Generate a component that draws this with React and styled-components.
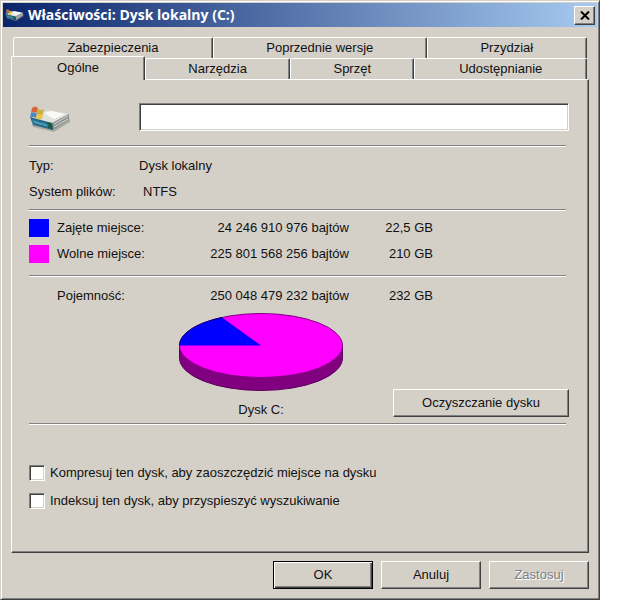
import React from 'react';
import styled, { createGlobalStyle, css } from 'styled-components';

const GlobalStyle = createGlobalStyle`
  * {
    box-sizing: border-box;
  }

  body {
    margin: 0;
    background: #ffffff;
    color: #111111;
    font: 13px/18px 'Liberation Sans', Arial, sans-serif;
  }
`;

const raised = css`
  border: 1px solid;
  border-color: #ffffff #404040 #404040 #ffffff;
  box-shadow: inset -1px -1px 0 #808080;
`;

const sunken = css`
  border: 1px solid;
  border-color: #808080 #ffffff #ffffff #808080;
  box-shadow: inset 1px 1px 0 #404040, inset -1px -1px 0 #d4d0c8;
`;

const Dialog = styled.main`
  margin-right: 40px;
  padding: 1px 2px 10px 1px;
  background: #d4d0c8;
  border: 1px solid;
  border-color: #d4d0c8 #404040 #404040 #d4d0c8;
  box-shadow: inset 1px 1px 0 #ffffff, inset -1px -1px 0 #808080;
`;

const TitleBar = styled.header`
  display: flex;
  align-items: center;
  height: 24px;
  margin: 1px 0 0 1px;
  padding: 0 2px 0 2px;
  background: linear-gradient(to right, #0a246a, #a6caf0);
`;

const Title = styled.h1`
  flex: 1;
  margin: 0 0 0 4px;
  color: #ffffff;
  font: bold 14px/18px 'Open Sans', Tahoma, sans-serif;
`;

const CloseButton = styled.button`
  ${raised}
  display: grid;
  place-items: center;
  width: 21px;
  height: 19px;
  padding: 0;
  background: #d4d0c8;
`;

const Tabs = styled.div`
  margin: 10px 9px 0 10px;
`;

const TabRow = styled.div`
  display: flex;
  margin: 0 1px;
`;

const Tab = styled.button`
  flex: ${({ $size }) => $size} 1 0;
  height: 21px;
  padding: 0;
  background: #d4d0c8;
  border: solid;
  border-width: 1px 1px 0;
  border-color: #ffffff #404040 #ffffff #ffffff;
  border-radius: 2px 2px 0 0;
  box-shadow: inset -1px 0 0 #808080;
  color: inherit;
  font: inherit;

  ${({ $selected }) =>
    $selected &&
    css`
      position: relative;
      height: 24px;
      margin: -2px 0 -1px -2px;
      padding-bottom: 2px;
    `}
`;

const Panel = styled.section`
  ${raised}
  margin: 0 8px 0 9px;
  padding: 22px 19px 42px 17px;
`;

const DriveHeader = styled.div`
  display: flex;
  align-items: center;
`;

const DriveSlot = styled.div`
  width: 110px;
  padding-top: 4px;
  line-height: 0;
`;

const NameInput = styled.input`
  ${sunken}
  flex: 1;
  min-width: 0;
  height: 28px;
  padding: 0 6px;
  background: #ffffff;
  font: inherit;
`;

const Rule = styled.hr`
  height: 2px;
  margin: ${({ $above }) => $above}px 3px ${({ $below }) => $below}px 0;
  border: 0;
  border-top: 1px solid #808080;
  background: #ffffff;
`;

const Facts = styled.dl`
  display: grid;
  grid-template-columns: 110px 1fr;
  margin: 0;
  line-height: 26px;
`;

const Term = styled.dt``;

const Value = styled.dd`
  margin: 0;
  padding-left: ${({ $indent }) => ($indent ? 4 : 0)}px;
`;

const Usage = styled.table`
  width: 404px;
  border-collapse: collapse;
  table-layout: fixed;
  line-height: 18px;
`;

const SwatchCell = styled.td`
  width: 28px;
  height: 26px;
  padding: 0;
`;

const Swatch = styled.span`
  display: block;
  width: 20px;
  height: 18px;
  background: ${({ $color }) => $color};
`;

const UsageLabel = styled.th`
  width: 120px;
  padding: 0;
  font-weight: normal;
  text-align: left;
`;

const Amount = styled.td`
  width: ${({ $wide }) => ($wide ? 172 : 84)}px;
  padding: 0;
  text-align: right;
`;

const ChartRow = styled.div`
  display: flex;
  align-items: flex-end;
  justify-content: space-between;
  padding-top: 4px;
`;

const Chart = styled.figure`
  margin: 0 0 0 150px;
  line-height: 0;
`;

const Caption = styled.figcaption`
  padding-top: 12px;
  line-height: 14px;
  text-align: center;
`;

const Button = styled.button`
  ${raised}
  width: ${({ $wide }) => ($wide ? 176 : 100)}px;
  height: 28px;
  padding: 0;
  background: #d4d0c8;
  color: inherit;
  font: inherit;

  ${({ $primary }) =>
    $primary &&
    css`
      border-color: #000000;
      box-shadow: inset 1px 1px 0 #ffffff, inset -1px -1px 0 #404040, inset -2px -2px 0 #808080;
    `}

  &:disabled {
    color: #808080;
    text-shadow: 1px 1px 0 #ffffff;
  }
`;

const Options = styled.div`
  display: grid;
  gap: 10px;
  padding-top: 34px;
`;

const Option = styled.label`
  display: flex;
  align-items: center;
  gap: 5px;
`;

const Checkbox = styled.input`
  ${sunken}
  appearance: none;
  width: 16px;
  height: 16px;
  margin: 0;
  background: #ffffff;
`;

const Actions = styled.footer`
  display: flex;
  justify-content: flex-end;
  gap: 8px;
  margin: 8px 8px 0 0;
`;

const backTabs = [
  { label: 'Zabezpieczenia', size: 200 },
  { label: 'Poprzednie wersje', size: 214 },
  { label: 'Przydział', size: 160 },
];

const frontTabs = [
  { label: 'Ogólne', size: 134, selected: true },
  { label: 'Narzędzia', size: 145 },
  { label: 'Sprzęt', size: 124 },
  { label: 'Udostępnianie', size: 173 },
];

const usage = [
  { label: 'Zajęte miejsce:', bytes: '24 246 910 976 bajtów', size: '22,5 GB', color: '#0000ff' },
  { label: 'Wolne miejsce:', bytes: '225 801 568 256 bajtów', size: '210 GB', color: '#ff00ff' },
];

const capacity = [{ label: 'Pojemność:', bytes: '250 048 479 232 bajtów', size: '232 GB' }];

const DriveIcon = ({ width, height }) => (
  <svg width={width} height={height} viewBox="0 0 42 26" aria-hidden="true">
    <path d="M3 18 L24 23 L41 13 L41 16 L25 26 L4 21 Z" fill="#8f938f" opacity="0.6" />
    <path d="M1 11 L19 4 L40 8 L23 17 Z" fill="#e0e2df" />
    <path d="M15 7 L22 5 L36 8 L25 13 Z" fill="#f9faf8" />
    <path d="M23 17 L40 8 L40 14 L24 24 Z" fill="#8b908c" />
    <path d="M25 18 L39 10 M25 21 L39 13" stroke="#d9dbd8" strokeWidth="1" />
    <path d="M1 11 L23 17 L24 24 L4 19 Z" fill="#26698c" />
    <path d="M3 14 L20 19 L20 21 L5 17 Z" fill="#4d9bb0" />
    <path d="M18 16 L23 17 L24 24 L19 22 Z" fill="#1b5a4c" />
    <path d="M3 2 Q6 -1 9 2 L8 7 Q5 5 2 7 Z" fill="#d9653b" />
    <path d="M9 3 Q12 5 15 3 L14 8 Q11 10 8 8 Z" fill="#c9b23e" />
    <path d="M2 7 Q5 5 8 8 L7 12 Q4 10 1 12 Z" fill="#4f87bd" />
    <path d="M8 8 Q11 10 14 8 L13 13 Q10 14 7 12 Z" fill="#edc641" />
  </svg>
);

const CloseIcon = () => (
  <svg width="10" height="9" viewBox="0 0 10 9" aria-hidden="true">
    <path d="M1 0.5 L9 8.5 M9 0.5 L1 8.5" stroke="#000000" strokeWidth="2" />
  </svg>
);

const PieChart = () => (
  <svg width="164" height="78" viewBox="0 0 164 78" role="img" aria-label="Dysk C:">
    <path
      d="M0.5 32.5 V45 A81.5 32.5 0 0 0 163.5 45 V32.5 Z"
      fill="#800080"
      stroke="#5c005c"
      strokeWidth="1"
    />
    <ellipse cx="82" cy="32.5" rx="81.5" ry="32" fill="#ff00ff" stroke="#800080" strokeWidth="1" />
    <path d="M82 32.5 H0.5 A81.5 32 0 0 1 43 4.5 Z" fill="#0000ff" />
    <path d="M0.5 32.5 A81.5 32 0 0 1 43 4.5" fill="none" stroke="#000080" strokeWidth="1" />
  </svg>
);

const TabStrip = ({ tabs }) => (
  <TabRow>
    {tabs.map((tab) => (
      <Tab
        key={tab.label}
        type="button"
        role="tab"
        aria-selected={Boolean(tab.selected)}
        $size={tab.size}
        $selected={tab.selected}
      >
        {tab.label}
      </Tab>
    ))}
  </TabRow>
);

const UsageTable = ({ rows }) => (
  <Usage>
    <tbody>
      {rows.map((row) => (
        <tr key={row.label}>
          <SwatchCell>{row.color && <Swatch $color={row.color} />}</SwatchCell>
          <UsageLabel scope="row">{row.label}</UsageLabel>
          <Amount $wide>{row.bytes}</Amount>
          <Amount>{row.size}</Amount>
        </tr>
      ))}
    </tbody>
  </Usage>
);

const App = () => (
  <>
    <GlobalStyle />
    <Dialog>
      <TitleBar>
        <DriveIcon width={19} height={12} />
        <Title>Właściwości: Dysk lokalny (C:)</Title>
        <CloseButton type="button" aria-label="Zamknij">
          <CloseIcon />
        </CloseButton>
      </TitleBar>
      <Tabs role="tablist">
        <TabStrip tabs={backTabs} />
        <TabStrip tabs={frontTabs} />
      </Tabs>
      <Panel role="tabpanel">
        <DriveHeader>
          <DriveSlot>
            <DriveIcon width={42} height={26} />
          </DriveSlot>
          <NameInput type="text" aria-label="Etykieta" />
        </DriveHeader>
        <Rule $above={13} $below={6} />
        <Facts>
          <Term>Typ:</Term>
          <Value>Dysk lokalny</Value>
          <Term>System plików:</Term>
          <Value $indent>NTFS</Value>
        </Facts>
        <Rule $above={4} $below={4} />
        <UsageTable rows={usage} />
        <Rule $above={8} $below={6} />
        <UsageTable rows={capacity} />
        <ChartRow>
          <Chart>
            <PieChart />
            <Caption>Dysk C:</Caption>
          </Chart>
          <Button type="button" $wide>
            Oczyszczanie dysku
          </Button>
        </ChartRow>
        <Rule $above={6} $below={5} />
        <Options>
          <Option>
            <Checkbox type="checkbox" />
            Kompresuj ten dysk, aby zaoszczędzić miejsce na dysku
          </Option>
          <Option>
            <Checkbox type="checkbox" />
            Indeksuj ten dysk, aby przyspieszyć wyszukiwanie
          </Option>
        </Options>
      </Panel>
      <Actions>
        <Button type="button" $primary>
          OK
        </Button>
        <Button type="button">Anuluj</Button>
        <Button type="button" disabled>
          Zastosuj
        </Button>
      </Actions>
    </Dialog>
  </>
);

export default App;
